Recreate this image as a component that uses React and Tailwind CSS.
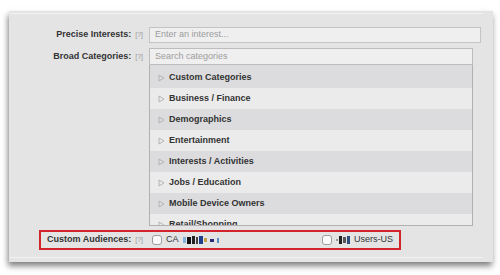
import React from "react";

const categories = [
  "Custom Categories",
  "Business / Finance",
  "Demographics",
  "Entertainment",
  "Interests / Activities",
  "Jobs / Education",
  "Mobile Device Owners",
  "Retail/Shopping",
];

function Help() {
  return <span className="ml-[4px] text-[7px] font-normal text-[#9a9a9a]">[?]</span>;
}

function Label({ children }) {
  return (
    <div className="w-[133px] shrink-0 text-right text-[9px] font-bold text-[#333]">
      {children}
      <Help />
    </div>
  );
}

function Arrow() {
  return (
    <svg width="7" height="8" viewBox="0 0 7 8" className="shrink-0">
      <polygon points="1,1 6,4 1,7" fill="none" stroke="#b4b4b4" strokeWidth="1" />
    </svg>
  );
}

function Box() {
  return <span className="inline-block h-[10px] w-[10px] shrink-0 rounded-[3px] border border-[#9c9c9c] bg-[#fafafa]" />;
}

export default function App() {
  return (
    <div
      className="min-h-screen bg-white pl-[9px] pt-[11px]"
      style={{ fontFamily: '"Liberation Sans", Arial, sans-serif' }}
    >
      <div className="h-[251px] w-[484px] bg-[#e4e4e5] pt-[2px] shadow-[-1px_4px_6px_rgba(0,0,0,0.5)]">
        <div className="ml-[1px] h-[245px] w-[473px] border-y border-[#f2f2f3] pt-[13px]">
          <div className="flex items-center">
            <Label>Precise Interests:</Label>
            <div className="ml-[6px] flex h-[16px] w-[332px] items-center border border-[#c4c4c4] bg-[#efeff0] pl-[5px] text-[9px] text-[#9c9c9c]">
              Enter an interest...
            </div>
          </div>

          <div className="mt-[5px] flex items-center">
            <Label>Broad Categories:</Label>
            <div className="ml-[6px] flex h-[17px] w-[324px] items-center border border-[#bdbdbd] bg-[#efeff0] pl-[5px] text-[9px] text-[#9c9c9c]">
              Search categories
            </div>
          </div>

          <div className="ml-[139px] h-[161px] w-[324px] overflow-hidden border-x border-b border-[#b0b0b2] bg-[#dcdcde] pt-[2px]">
            {categories.map((c, i) => (
              <div
                key={c}
                className={`flex h-[21px] shrink-0 items-center gap-[4px] pl-[8px] text-[9px] font-bold text-[#333] ${
                  i % 2 === 0 ? "bg-[#dcdcde]" : "bg-[#ebebec]"
                }`}
              >
                <Arrow />
                <span>{c}</span>
              </div>
            ))}
          </div>

          <div className="ml-[29px] mt-[4px] flex h-[20px] w-[362px] items-center border-2 border-[#d3232b] pr-[6px]">
            <div className="w-[102px] shrink-0 text-right text-[9px] font-bold text-[#333]">
              Custom Audiences:
              <Help />
            </div>
            <div className="ml-[9px] flex items-center gap-[4px]">
              <Box />
              <span className="text-[9px] text-[#333]">CA</span>
              <span className="flex items-center gap-[1px]">
                <span className="h-[6px] w-[3px] bg-[#7fb3d9]" />
                <span className="h-[7px] w-[4px] bg-[#111]" />
                <span className="h-[8px] w-[3px] bg-[#222]" />
                <span className="h-[7px] w-[2px] bg-[#444]" />
                <span className="h-[8px] w-[4px] bg-[#1f3f8f]" />
                <span className="h-[4px] w-[3px] bg-[#c2a24a]" />
                <span className="ml-[2px] h-[3px] w-[4px] bg-[#2a2a7a]" />
                <span className="ml-[2px] h-[5px] w-[2px] bg-[#5a8fc0]" />
              </span>
            </div>
            <div className="ml-auto flex items-center gap-[4px]">
              <Box />
              <span className="flex items-center gap-[1px]">
                <span className="h-[2px] w-[2px] bg-[#999]" />
                <span className="h-[8px] w-[3px] bg-[#222]" />
                <span className="h-[6px] w-[3px] bg-[#555]" />
                <span className="h-[8px] w-[3px] bg-[#2c4d7a]" />
              </span>
              <span className="text-[9px] text-[#333]">Users-US</span>
            </div>
          </div>
        </div>
      </div>
    </div>
  );
}
